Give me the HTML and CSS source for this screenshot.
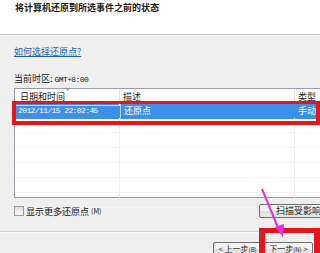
FILE: index.html
```html
<!DOCTYPE html>
<html lang="zh-CN">

<head>
    <meta charset="UTF-8">
    <meta name="viewport" content="width=device-width, initial-scale=1.0">
    <title>系统还原</title>
    <link rel="stylesheet" href="styles.css">
</head>

<body>

    <div class="header">
        <h1 class="title">将计算机还原到所选事件之前的状态</h1>
    </div>

    <div class="content">
        <a class="help" href="#">如何选择还原点?</a>
        <p class="zone">当前时区: <span class="mono">GMT+8:00</span></p>

        <div class="list">
            <div class="row head">
                <span class="c1">日期和时间<i class="sort">ˇ</i></span>
                <span class="c2">描述</span>
                <span class="c3">类型</span>
            </div>
            <div class="row sel">
                <span class="c1 mono">2012/11/15 22:02:45</span>
                <span class="c2">还原点</span>
                <span class="c3">手动</span>
            </div>
            <div class="row"><span class="c1"></span><span class="c2"></span><span class="c3"></span></div>
            <div class="row"><span class="c1"></span><span class="c2"></span><span class="c3"></span></div>
            <div class="row"><span class="c1"></span><span class="c2"></span><span class="c3"></span></div>
            <div class="row"><span class="c1"></span><span class="c2"></span><span class="c3"></span></div>
            <div class="row"><span class="c1"></span><span class="c2"></span><span class="c3"></span></div>
            <div class="row"><span class="c1"></span><span class="c2"></span><span class="c3"></span></div>
        </div>

        <div class="opts">
            <label class="more"><span class="box"></span>显示更多还原点<small>(M)</small></label>
            <button class="btn scan">扫描受影响的程序(A)</button>
        </div>
    </div>

    <div class="footer">
        <button class="btn">&lt; 上一步<small>(B)</small></button>
        <button class="btn">下一步<small>(N)</small> &gt;</button>
    </div>

    <!-- annotations drawn over the dialog -->
    <div class="mark mark-row"></div>
    <div class="mark mark-next"></div>
    <svg class="arrow" width="40" height="60" viewBox="0 0 40 60">
        <line x1="2" y1="3" x2="19" y2="44" stroke="#e02ee0" stroke-width="2" />
        <polygon points="15,41 24,38 23,51" fill="#e02ee0" />
    </svg>

</body>

</html>
```

FILE: styles.css
```css
body {
    margin: 0;
    width: 320px;
    height: 253px;
    overflow: hidden;
    position: relative;
    background-color: #efefef;
    font-family: "Noto Sans CJK SC", "Noto Sans", sans-serif;
    font-size: 9px;
    color: #1a1a1a;
}

.header {
    height: 34px;
    background-color: #fff;
    border-bottom: 1px solid #c6c6c6;
    box-shadow: 0 1px 0 #fafafa;
}

.title {
    margin: 0;
    padding: 2px 0 0 15px;
    font-size: 9px;
    line-height: 11px;
    font-weight: bold;
}

.content {
    width: 335px;
    padding: 11px 0 0 14px;
}

.help {
    display: block;
    line-height: 12px;
    color: #1a5fb4;
}

.zone {
    margin: 15px 0 0;
    line-height: 12px;
}

.mono {
    font-family: "Liberation Mono", "DejaVu Sans Mono", monospace;
    font-size: 8px;
    letter-spacing: -0.6px;
}

.list {
    margin-top: 2px;
    height: 108px;
    background-color: #fff;
    border: 1px solid #9a9ea6;
}

.row {
    display: grid;
    grid-template-columns: 105px 175px 1fr;
    height: 15px;
    line-height: 15px;
}

.row span {
    padding-left: 3px;
    border-right: 1px solid #f0f0f0;
    border-bottom: 1px solid #f4f4f4;
    white-space: nowrap;
}

.row.head {
    height: 14px;
    line-height: 16px;
}

.row.head span {
    border-right: 1px solid #e2e2e2;
    border-bottom: 1px solid #dcdcdc;
    color: #222;
}

.row.head .c1 {
    padding-left: 5px;
    position: relative;
}

.sort {
    position: absolute;
    left: 50px;
    top: -5px;
    font-style: normal;
    color: #888;
}

.row.sel span {
    background-color: #3d8fe9;
    color: #fff;
    border-color: #3d8fe9;
}

.row.sel .c2 {
    border-left: 1px solid #bcd8f7;
}

.opts {
    display: flex;
    align-items: center;
    margin-top: 7px;
    height: 12px;
}

.more {
    flex: 1;
    display: flex;
    align-items: center;
    gap: 2px;
}

.box {
    width: 8px;
    height: 8px;
    border: 1px solid #9c9c9c;
    background: linear-gradient(#dcdcdc, #fafafa);
}

small {
    font-size: 7px;
}

.btn {
    height: 14px;
    padding: 0 3px;
    border: 1px solid #707070;
    border-radius: 2px;
    background: linear-gradient(#f4f4f4 50%, #dfdfdf 50%, #e8e8e8);
    font-family: "Noto Sans CJK SC", sans-serif;
    font-size: 9px;
    line-height: 12px;
    color: #1a1a1a;
}

.scan {
    width: 90px;
    padding-left: 16px;
    text-align: left;
    white-space: nowrap;
}

.footer {
    margin-top: 14px;
    border-top: 1px solid #cfcfcf;
    box-shadow: inset 0 1px 0 #fafafa;
    height: 30px;
    display: flex;
    justify-content: flex-end;
    gap: 2px;
    padding: 10px 7px 0 0;
}

.footer .btn {
    width: 49px;
    padding: 0;
    font-size: 8px;
    white-space: nowrap;
}

.footer .btn small {
    font-size: 6px;
}

.mark {
    position: absolute;
    border: 4px solid #e8141c;
    box-sizing: border-box;
}

.mark-row {
    left: 12px;
    top: 101px;
    width: 308px;
    height: 24px;
    border-top-width: 3px;
}

.mark-next {
    left: 259px;
    top: 228px;
    width: 61px;
    height: 40px;
    border-width: 5px 6px 5px 6px;
}

.arrow {
    position: absolute;
    left: 260px;
    top: 186px;
}
```
